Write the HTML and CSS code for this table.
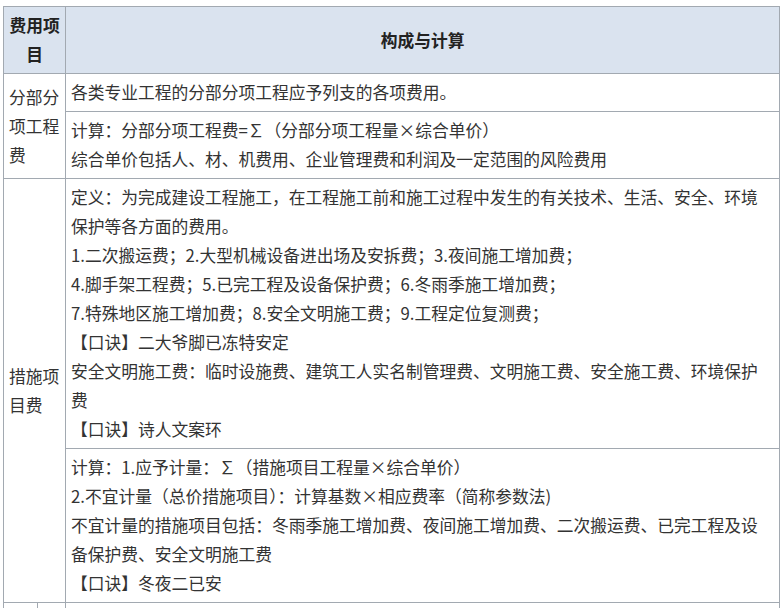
FILE: index.html
```html
<!DOCTYPE html>
<html lang="zh-CN">
<head>
<meta charset="utf-8">
<title>费用项目构成与计算</title>
<link rel="stylesheet" href="styles.css">
</head>
<body>
<div class="page">
<table class="cost">
  <colgroup>
    <col class="col-a">
    <col class="col-b">
    <col class="col-c">
  </colgroup>
  <thead>
    <tr>
      <th colspan="2" class="head-item">费用项目</th>
      <th>构成与计算</th>
    </tr>
  </thead>
  <tbody>
    <tr>
      <td colspan="2" rowspan="2" class="item">分部分项工程费</td>
      <td class="desc"><p>各类专业工程的分部分项工程应予列支的各项费用。</p></td>
    </tr>
    <tr>
      <td class="desc">
        <p>计算：分部分项工程费=∑（分部分项工程量×综合单价）</p>
        <p>综合单价包括人、材、机费用、企业管理费和利润及一定范围的风险费用</p>
      </td>
    </tr>
    <tr>
      <td colspan="2" rowspan="2" class="item">措施项目费</td>
      <td class="desc">
        <p>定义：为完成建设工程施工，在工程施工前和施工过程中发生的有关技术、生活、安全、环境保护等各方面的费用。</p>
        <p>1.二次搬运费；2.大型机械设备进出场及安拆费；3.夜间施工增加费；</p>
        <p>4.脚手架工程费；5.已完工程及设备保护费；6.冬雨季施工增加费；</p>
        <p>7.特殊地区施工增加费；8.安全文明施工费；9.工程定位复测费；</p>
        <p>【口诀】二大爷脚已冻特安定</p>
        <p>安全文明施工费：临时设施费、建筑工人实名制管理费、文明施工费、安全施工费、环境保护费</p>
        <p>【口诀】诗人文案环</p>
      </td>
    </tr>
    <tr>
      <td class="desc">
        <p>计算：1.应予计量：∑（措施项目工程量×综合单价）</p>
        <p>2.不宜计量（总价措施项目）：计算基数×相应费率（简称参数法)</p>
        <p>不宜计量的措施项目包括：冬雨季施工增加费、夜间施工增加费、二次搬运费、已完工程及设备保护费、安全文明施工费</p>
        <p>【口诀】冬夜二已安</p>
      </td>
    </tr>
    <tr class="next">
      <td></td>
      <td></td>
      <td class="desc"></td>
    </tr>
  </tbody>
</table>
</div>
</body>
</html>
```

FILE: styles.css
```css
html, body {
  margin: 0;
  padding: 0;
  background: #ffffff;
}

.page {
  padding: 6px 0 0 3px;
}

.cost {
  width: 777px;
  table-layout: fixed;
  border-collapse: collapse;
  font-family: "Noto Sans CJK SC", "Microsoft YaHei", sans-serif;
  font-size: 16.75px;
  line-height: 29px;
  color: #333333;
}

.col-a { width: 34px; }
.col-b { width: 28px; }

.cost th,
.cost td {
  border: 1px solid #a2a9b1;
  padding: 4px 5px;
  vertical-align: middle;
}

.cost th {
  background: #dae3ef;
  color: #222222;
  font-weight: bold;
  text-align: center;
}

.cost td.item {
  text-align: left;
}

.cost td.desc {
  padding-right: 12px;
  text-align: left;
}

.cost p {
  margin: 0;
}

.next td {
  height: 40px;
}
```
